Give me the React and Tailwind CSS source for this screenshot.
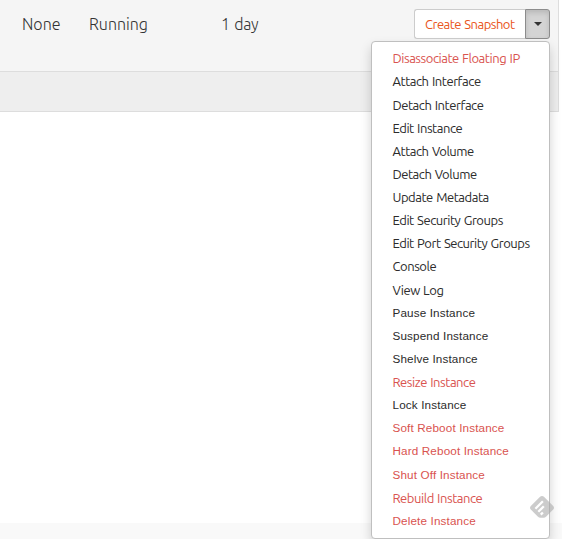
const DARK = 'text-[#2b2b2b]';
const RED = 'text-[#d9534f]';
const LINK = 'font-["Ubuntu","Noto_Sans",sans-serif] text-[13px] tracking-[-0.45px] [word-spacing:0.8px]';
const BUTTON = 'font-["Liberation_Sans",Arial,sans-serif] text-[11.7px] tracking-[0.14px]';

const actions = [
  { label: 'Disassociate Floating IP', color: RED, face: LINK },
  { label: 'Attach Interface', color: DARK, face: LINK },
  { label: 'Detach Interface', color: DARK, face: LINK },
  { label: 'Edit Instance', color: DARK, face: LINK },
  { label: 'Attach Volume', color: DARK, face: LINK },
  { label: 'Detach Volume', color: DARK, face: LINK },
  { label: 'Update Metadata', color: DARK, face: LINK },
  { label: 'Edit Security Groups', color: DARK, face: LINK },
  { label: 'Edit Port Security Groups', color: DARK, face: LINK },
  { label: 'Console', color: DARK, face: LINK },
  { label: 'View Log', color: DARK, face: LINK },
  { label: 'Pause Instance', color: DARK, face: BUTTON },
  { label: 'Suspend Instance', color: DARK, face: BUTTON },
  { label: 'Shelve Instance', color: DARK, face: BUTTON },
  { label: 'Resize Instance', color: RED, face: LINK },
  { label: 'Lock Instance', color: DARK, face: BUTTON },
  { label: 'Soft Reboot Instance', color: RED, face: BUTTON },
  { label: 'Hard Reboot Instance', color: RED, face: BUTTON },
  { label: 'Shut Off Instance', color: RED, face: BUTTON },
  { label: 'Rebuild Instance', color: RED, face: LINK },
  { label: 'Delete Instance', color: RED, face: BUTTON },
];

function ActionMenu() {
  return (
    <ul className="absolute right-0 top-[32px] h-[498px] w-[179px] rounded-[4px] border border-[#bfbfbf] bg-white pb-[5px] pt-[4.7px] font-normal shadow-[0_6px_12px_rgba(0,0,0,0.175)]">
      {actions.map((a) => (
        <li key={a.label} className="flex h-[23.14px] items-center pl-[20.5px]">
          <button type="button" className={`whitespace-nowrap leading-[18px] ${a.face} ${a.color}`}>
            {a.label}
          </button>
        </li>
      ))}
    </ul>
  );
}

function FeedlyBadge() {
  return (
    <svg className="absolute left-[530px] top-[496px] h-[23px] w-[24px]" viewBox="0 0 24 23">
      <path d="M9.8 1.1 Q12 -.9 14.2 1.1 L23.2 10 Q24.8 11.8 23.2 13.6 L16 20.8 Q15 21.7 13.7 21.7 H10.3 Q9 21.7 8 20.8 L.8 13.6 Q-.8 11.8 .8 10 Z" fill="#aaa" fillOpacity=".6" />
      <g stroke="#fff" strokeWidth="2.3" strokeLinecap="butt">
        <path d="M5.4 12.7 L12.9 5.2" />
        <path d="M8.3 15.8 L13.8 10.3" />
        <path d="M10.8 18.6 L12.9 16.5" />
      </g>
    </svg>
  );
}

export default function App() {
  return (
    <div className="relative flex h-[539px] w-[562px] flex-col overflow-hidden bg-white">
      <div className="h-[112px] w-[559px] border-r border-[#dddddd]">
        <div className="flex h-[71px] items-start bg-[#f5f5f5] font-['Ubuntu','Open_Sans',sans-serif] text-[16px] font-light leading-[24px] text-[#333333]">
          <span className="ml-[22px] mt-[12px] w-[67px]">None</span>
          <span className="mt-[12px] w-[132px]">Running</span>
          <span className="mt-[12px] w-[193px] [word-spacing:1px] tracking-[-0.25px]">1 day</span>
          <div className="relative z-10 mt-[9px] flex h-[30px] w-[136px] shrink-0">
            <button type="button" className="w-[111px] shrink-0 whitespace-nowrap rounded-l-[3px] border border-r-0 border-[#cccccc] bg-white pl-[10px] text-left font-['Ubuntu','Noto_Sans',sans-serif] text-[13px] font-normal leading-[28px] tracking-[-0.5px] [word-spacing:0.8px] text-[#e95420]">
              Create Snapshot
            </button>
            <button type="button" aria-label="More actions" className="flex w-[25px] shrink-0 items-center justify-center rounded-r-[3px] border border-[#8c8c8c] bg-[#d4d4d4] shadow-[inset_0_3px_5px_rgba(0,0,0,0.125)]">
              <span className="h-0 w-0 border-x-4 border-t-4 border-x-transparent border-t-[#333333]" />
            </button>
            <ActionMenu />
          </div>
        </div>
        <div className="h-[41px] border-y border-[#dddddd] bg-[#eeeeee]" />
      </div>
      <div className="grow" />
      <div className="h-[16px] bg-[#f9f9f9]" />
      <div className="pointer-events-none absolute inset-0 z-20">
        <FeedlyBadge />
      </div>
    </div>
  );
}
